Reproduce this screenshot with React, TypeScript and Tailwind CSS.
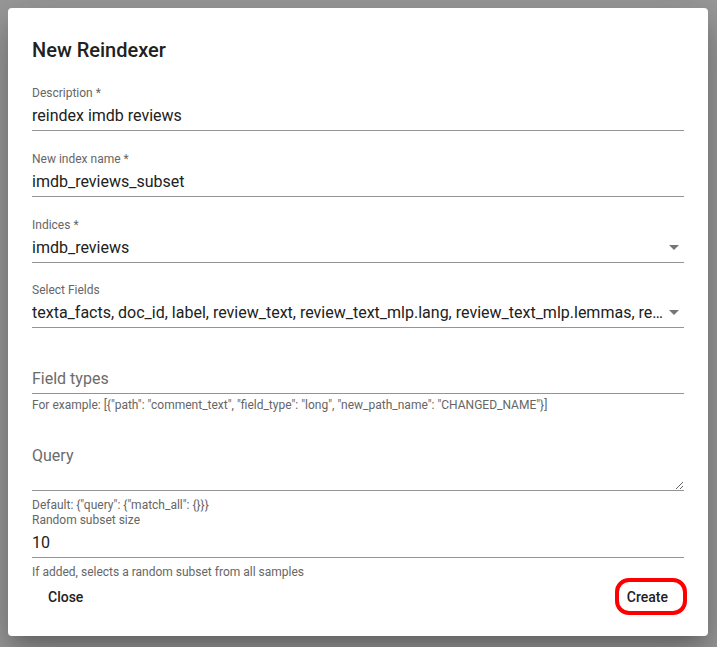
import type { ReactNode } from 'react'

const font = { fontFamily: 'Roboto, "Liberation Sans", Arial, sans-serif' }

function Caret() {
  return (
    <svg width="10" height="5" viewBox="0 0 10 5" className="shrink-0 mr-[5px]">
      <path d="M0 0l5 5 5-5z" fill="#757575" />
    </svg>
  )
}

function Field({
  label,
  value,
  select,
  className = '',
}: {
  label?: string
  value?: string
  select?: boolean
  className?: string
}) {
  const empty = !value
  return (
    <div className={className}>
      <div className="h-[14px] text-[12px] leading-[14px] text-[#666]">{empty ? '' : label}</div>
      <div className="flex items-center border-b border-[#949494] pt-[4px] pb-[3px]">
        <div
          className={`flex-1 min-w-0 truncate text-[16px] leading-[23px] ${
            empty ? 'text-[#6b6b6b]' : 'text-[#212121]'
          } ${select ? 'pr-[2px]' : ''}`}
        >
          {empty ? label : value}
        </div>
        {select && <Caret />}
      </div>
    </div>
  )
}

function Helper({ children, className = '' }: { children: ReactNode; className?: string }) {
  return <div className={`text-[12px] leading-[14px] text-[#666] ${className}`}>{children}</div>
}

export default function App() {
  return (
    <div className="min-h-[647px] bg-[#9a9a9a] p-[8px]" style={font}>
      <div className="w-[700px] h-[628px] bg-white rounded-[4px] shadow-[0_11px_15px_-7px_rgba(0,0,0,0.2),0_24px_38px_3px_rgba(0,0,0,0.14),0_9px_46px_8px_rgba(0,0,0,0.12)] flex flex-col">
        <h2 className="px-6 pt-[26px] text-[20px] leading-[32px] font-medium text-[#212121]">New Reindexer</h2>

        <div className="px-6 flex flex-col">
          <Field className="mt-[20px]" label="Description *" value="reindex imdb reviews" />
          <Field className="mt-[21px]" label="New index name *" value="imdb_reviews_subset" />
          <Field className="mt-[21px]" label="Indices *" value="imdb_reviews" select />
          <Field
            className="mt-[20px]"
            label="Select Fields"
            value="texta_facts, doc_id, label, review_text, review_text_mlp.lang, review_text_mlp.lemmas, review_text_mlp.pos_tags, review_text_mlp.text"
            select
          />

          <Field className="mt-[21px]" label="Field types" />
          <Helper className="mt-[4px]">
            For example: [{'{'}"path": "comment_text", "field_type": "long", "new_path_name": "CHANGED_NAME"{'}'}]
          </Helper>

          <div className="mt-[15px]">
            <div className="h-[14px]" />
            <div className="border-b border-[#949494]">
              <textarea
                placeholder="Query"
                className="block w-full h-[49px] pt-[3px] pr-[2px] text-[16px] leading-[23px] text-[#212121] placeholder:text-[#6b6b6b] outline-none resize-y"
                style={font}
              />
            </div>
          </div>
          <Helper className="mt-[7px]">Default: {'{'}"query": {'{'}"match_all": {'{}'}{'}'}{'}'}</Helper>
          <Field className="mt-[1px]" label="Random subset size" value="10" />
          <Helper className="mt-[7px]">If added, selects a random subset from all samples</Helper>
        </div>

        <div className="flex items-center justify-between px-[32px]">
          <button className="h-[36px] px-2 text-[14px] font-medium text-[#212121]">Close</button>
          <button className="relative h-[36px] px-2 text-[14px] font-medium text-[#212121]">
            Create
            <span className="absolute -left-[4px] -right-[11px] -top-[1px] bottom-0 rounded-[14px] border-[4px] border-[#ff0000] pointer-events-none" />
          </button>
        </div>
      </div>
    </div>
  )
}
